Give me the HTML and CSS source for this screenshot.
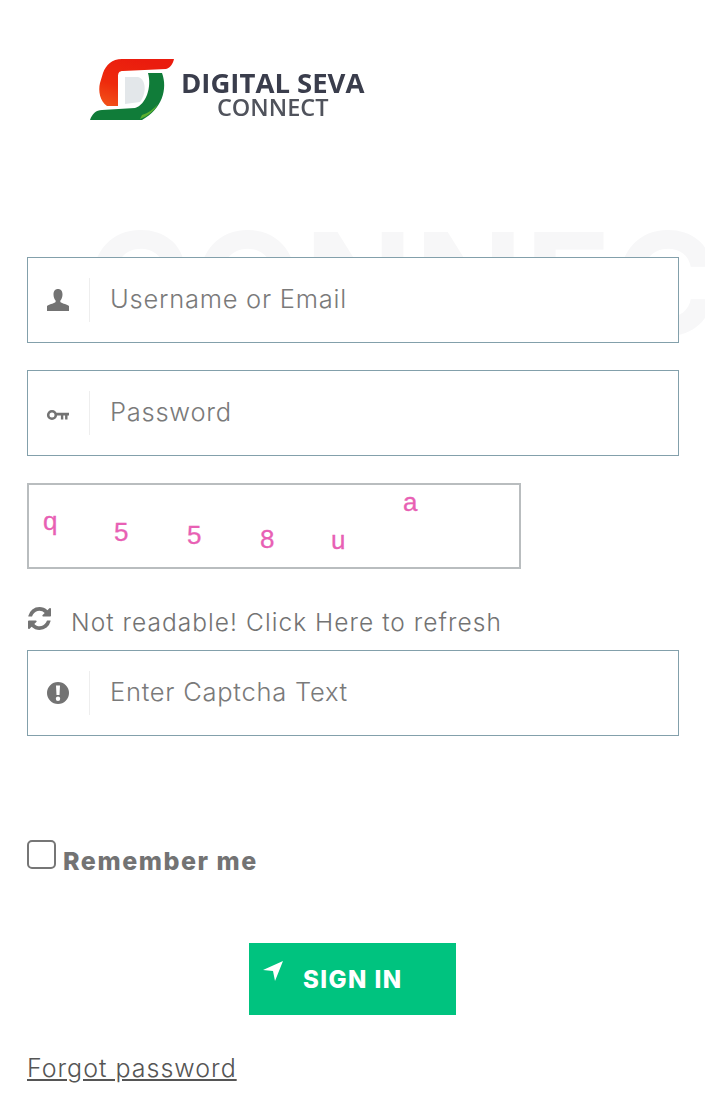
FILE: index.html
```html
<!DOCTYPE html>
<html lang="en">
<head>
  <meta charset="UTF-8">
  <title>Digital Seva Connect - Login</title>
  <link rel="stylesheet" href="styles.css">
</head>
<body>
  <div class="marca-agua">CONNEC</div>

  <div class="logo">
    <svg class="logo-icone" width="86" height="66" viewBox="0 0 86 66">
      <defs>
        <linearGradient id="vermelho" x1="0" y1="1" x2="0.5" y2="0">
          <stop offset="0" stop-color="#f2561a"/>
          <stop offset="0.45" stop-color="#ee2a0c"/>
          <stop offset="1" stop-color="#ea1c0e"/>
        </linearGradient>
      </defs>
      <path d="M84 2 L32 2 C22 2 16 8 13 16 L10 26 C8 34 10 44 17 49 L28 49 L28 20 C28 16 29 14 33 14 L76 12 C80 11 83 7 84 2 Z" fill="url(#vermelho)"/>
      <path d="M58 16 L72 16 C78 32 72 52 52 63 L0 63 C2 57 6 53 12 53 L45 51 C56 48 62 30 58 16 Z" fill="#107c39"/>
      <path d="M50 62 C58 59 64 54 68 47 C64 52 58 56 52 58 Z" fill="#5cb030"/>
      <path d="M35 20 L48 20 C56 22 57 36 50 45 L35 47 Z" fill="#e3e7ea"/>
    </svg>
    <div class="logo-texto">
      <div class="logo-titulo">DIGITAL SEVA</div>
      <div class="logo-sub">CONNECT</div>
    </div>
  </div>

  <form class="formulario">
    <label class="campo">
      <span class="campo-icone">
        <svg width="24" height="24" viewBox="0 0 24 24"><path d="M12 1c-3 0-4.500 2.200-4.500 5.500 0 2.400.8 4.600 1.900 5.800.5.600.4 1.700-.3 2.100-1.600.9-6.600 2.200-8.100 3.600V23h22v-5c-1.500-1.400-6.500-2.700-8.100-3.600-.7-.4-.8-1.500-.3-2.100 1.100-1.200 1.900-3.400 1.900-5.800C16.500 3.200 15 1 12 1z" fill="#737373"/></svg>
      </span>
      <input type="text" placeholder="Username or Email">
    </label>

    <label class="campo">
      <span class="campo-icone">
        <svg width="24" height="24" viewBox="0 0 24 24"><circle cx="6" cy="14" r="3.800" fill="none" stroke="#737373" stroke-width="2.600"/><path d="M10 11.800h13v2.600h-1.500v4h-2.400v-4h-1.800v4h-2.400v-4H10z" fill="#737373"/></svg>
      </span>
      <input type="password" placeholder="Password">
    </label>

    <svg class="captcha" width="494" height="86" viewBox="0 0 494 86">
      <rect x="1" y="1" width="492" height="84" fill="#fff" stroke="#b9bdbf" stroke-width="2"/>
      <g class="captcha-letras">
        <text x="16" y="47">q</text>
        <text x="87" y="58">5</text>
        <text x="160" y="61">5</text>
        <text x="233" y="65">8</text>
        <text x="304" y="66">u</text>
        <text x="376" y="28">a</text>
      </g>
    </svg>

    <div class="atualizar">
      <svg width="23" height="23" viewBox="128 128 1536 1536"><path d="M1639 1056q0 5-1 7-64 268-268 434.500t-478 166.500q-146 0-282.500-55t-243.500-157l-129 129q-19 19-45 19t-45-19-19-45v-448q0-26 19-45t45-19h448q26 0 45 19t19 45-19 45l-137 137q71 66 161 102t187 36q134 0 250-65t186-179q11-17 53-117 8-23 30-23h192q13 0 22.500 9.500t9.500 22.500zm25-800v448q0 26-19 45t-45 19h-448q-26 0-45-19t-19-45 19-45l138-138q-148-137-349-137-134 0-250 65t-186 179q-11 17-53 117-8 23-30 23h-199q-13 0-22.500-9.500t-9.500-22.500v-7q65-268 270-434.500t480-166.500q146 0 284 55.500t245 156.500l130-129q19-19 45-19t45 19 19 45z" fill="#737373"/></svg>
      <span>Not readable! Click Here to refresh</span>
    </div>

    <label class="campo">
      <span class="campo-icone">
        <svg width="24" height="24" viewBox="0 0 24 24"><path d="M12 1a11 11 0 1 0 0 22 11 11 0 0 0 0-22zm-2 3.500h4l-.5 9.500h-3zm2 11a2.200 2.200 0 1 1 0 4.400 2.200 2.200 0 0 1 0-4.400z" fill="#737373" fill-rule="evenodd"/></svg>
      </span>
      <input type="text" placeholder="Enter Captcha Text">
    </label>

    <label class="lembrar">
      <input type="checkbox">
      <span>Remember me</span>
    </label>

    <button type="button" class="entrar">
      <svg width="22" height="22" viewBox="0 0 22 22"><path d="M21 1 L1 10 L11 11 L13 21 Z" fill="#fff"/></svg>
      <span>SIGN IN</span>
    </button>

    <a class="esqueci" href="#">Forgot password</a>
  </form>
</body>
</html>
```

FILE: styles.css
```css
body {
  font-family: 'Inter', 'Liberation Sans', sans-serif;
  background: #fff;
  margin: 0;
  padding: 0 26px 0 27px;
  color: #737373;
  position: relative;
}

/* texto gigante por tras do formulario */
.marca-agua {
  position: absolute;
  top: 213px;
  left: 0;
  right: 0;
  padding-left: 86px;
  overflow: hidden;
  font-weight: 700;
  font-size: 142px;
  line-height: 140px;
  letter-spacing: 2px;
  color: #f7f7f8;
  white-space: nowrap;
}

.logo {
  display: flex;
  align-items: flex-start;
  padding: 57px 0 0 63px;
  height: 257px;
  box-sizing: border-box;
  filter: blur(0.5px);
}

.logo-icone {
  flex-shrink: 0;
  margin-right: 5px;
}

.logo-texto {
  padding-top: 13px;
  text-align: center;
}

.logo-titulo {
  font-family: 'Open Sans', sans-serif;
  font-weight: 700;
  font-size: 27.500px;
  line-height: 26px;
  color: #3a3d4c;
  white-space: nowrap;
}

.logo-sub {
  font-family: 'Open Sans', sans-serif;
  font-weight: 600;
  font-size: 23.500px;
  line-height: 22px;
  color: #50535c;
}

.formulario {
  position: relative;
}

.campo {
  display: flex;
  align-items: center;
  height: 86px;
  box-sizing: border-box;
  border: 1px solid #83a0ab;
  margin-bottom: 27px;
  background: #fff;
}

.campo-icone {
  display: flex;
  align-items: center;
  justify-content: center;
  width: 59px;
  padding-right: 2px;
  height: 44px;
  border-right: 1px solid #eeeeee;
  flex-shrink: 0;
}

.campo input {
  flex: 1;
  min-width: 0;
  border: none;
  outline: none;
  padding: 0 0 3px 20px;
  background: transparent;
  font-family: inherit;
  font-size: 25.500px;
  font-weight: 300;
  letter-spacing: 0.75px;
}

.campo input::placeholder {
  color: #7a7a7a;
  opacity: 1;
}

.captcha {
  display: block;
  margin-bottom: 37px;
}

.captcha-letras text {
  font-family: 'Liberation Sans', sans-serif;
  font-size: 26px;
  fill: #e860b4;
  stroke: #e860b4;
  stroke-width: 0.3px;
}

.atualizar {
  display: flex;
  align-items: center;
  gap: 20px;
  height: 31px;
  margin-bottom: 13px;
  font-size: 24.500px;
  font-weight: 300;
  letter-spacing: 1.05px;
  white-space: nowrap;
}

.atualizar svg {
  margin: -6px 0 0 1px;
}

.lembrar {
  display: flex;
  align-items: flex-start;
  margin-top: 104px;
  font-weight: 800;
  font-size: 25px;
  line-height: 29px;
  letter-spacing: 1.55px;
}

.lembrar input {
  appearance: none;
  width: 29px;
  height: 29px;
  margin: 0 7px 0 0;
  border: 2px solid #767676;
  border-radius: 5px;
  background: #fff;
}

.lembrar span {
  margin-top: 7px;
}

.entrar {
  display: flex;
  align-items: center;
  width: 207px;
  height: 72px;
  margin: 67px 0 0 222px;
  padding: 0 0 0 13px;
  border: none;
  background: #00c37f;
  color: #fff;
  font-family: inherit;
  font-size: 24px;
  font-weight: 800;
  letter-spacing: 1.4px;
}

.entrar svg {
  margin: -16px 19px 0 0;
}

.esqueci {
  display: block;
  margin-top: 38px;
  font-size: 25px;
  font-weight: 300;
  letter-spacing: 1px;
  color: #555;
}
```
